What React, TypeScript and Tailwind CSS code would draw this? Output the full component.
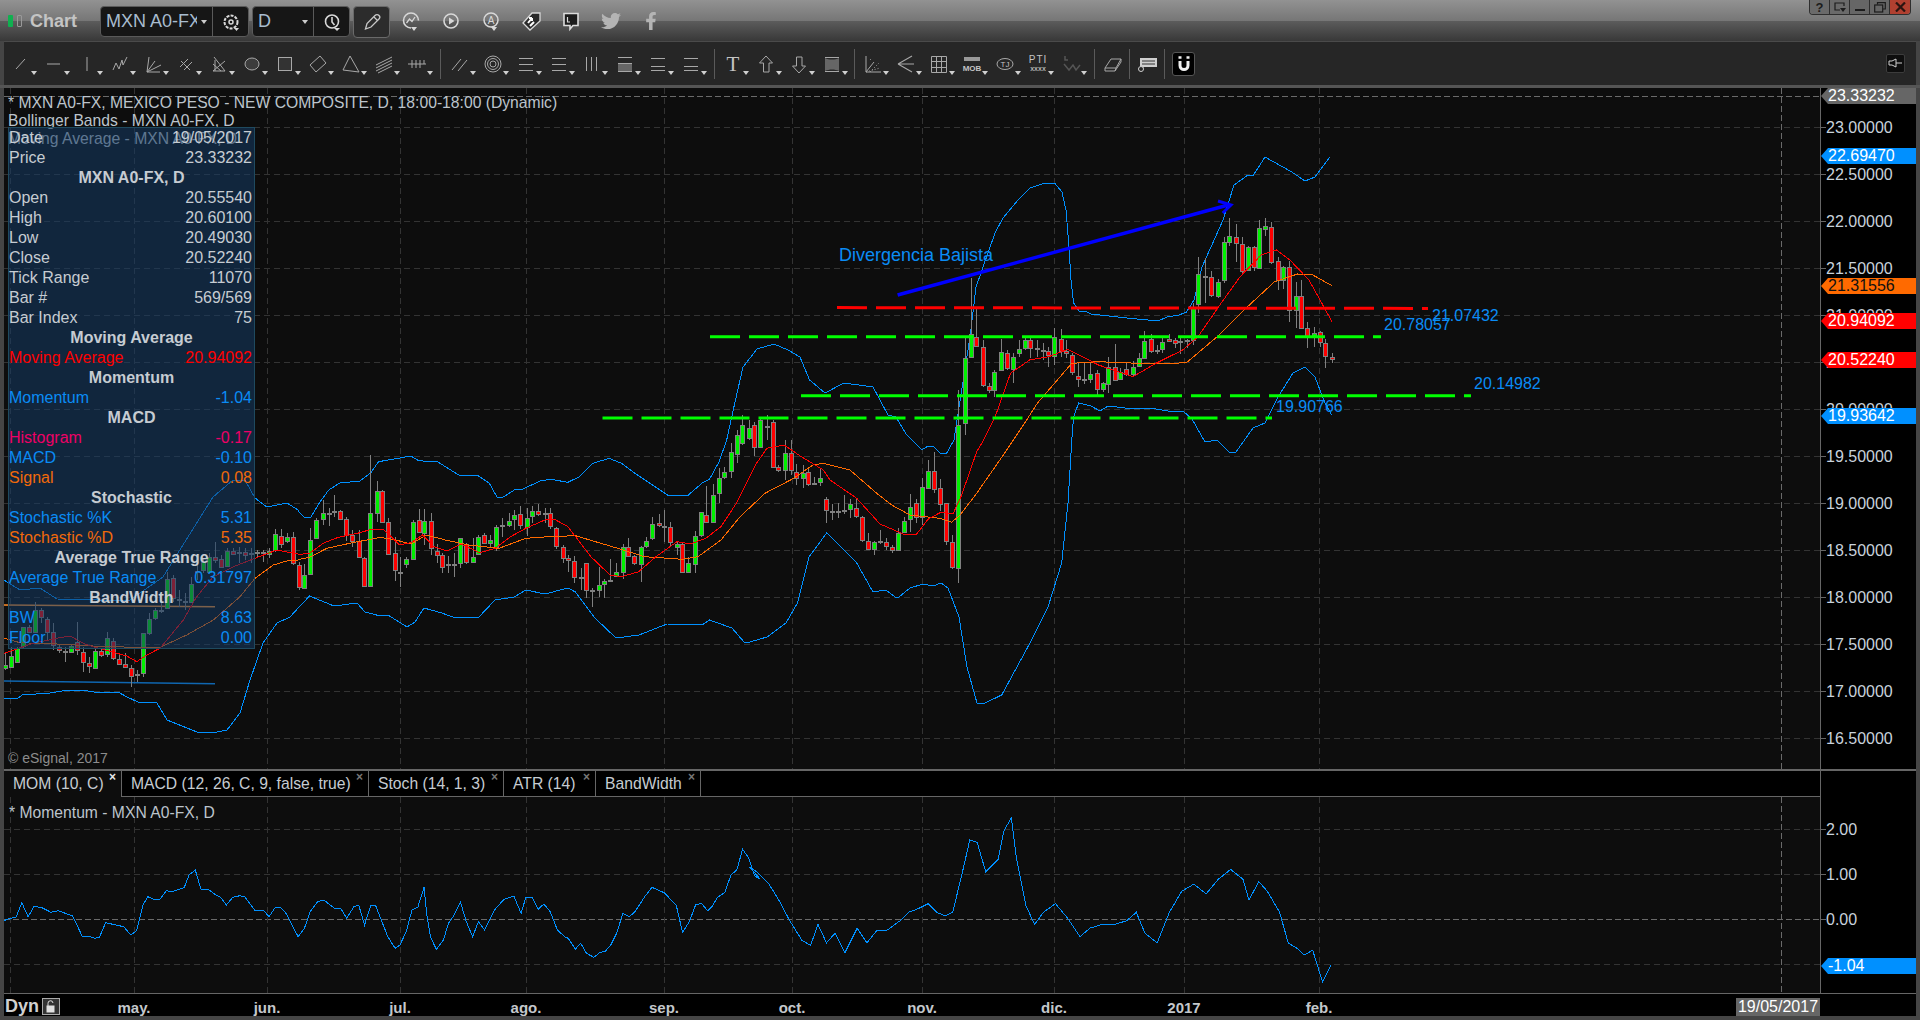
import React from "react";
import { FaTwitter, FaFacebookF } from "react-icons/fa";

type C = [number, number, number, number, number, string];
type XY = (x: number, y: number) => [number, number];

const z5: XY = (x, y) => [x / 3, 390 + y / 3];
const z11: XY = (x, y) => [x / 2.613 + 300, 440 + y / 3];
const z12: XY = (x, y) => [x / 3 + 800, 420 + y / 3];
const z7: XY = (x, y) => [x / 2.613 + 800, 140 + y / 3];
const z6: XY = (x, y) => [x / 2.063, 740 + y / 3];
const disp: XY = (x, y) => [x * 1.2245, y * 1.2245];

const candlesA: C[] = [
  [14, 790, 825, 835, 840, "g"], [32, 770, 797, 830, 835, "g"], [50, 770, 775, 818, 820, "g"], [68, 712, 712, 770, 775, "g"],
  [86, 705, 712, 726, 730, "r"], [104, 635, 660, 725, 727, "g"], [122, 655, 660, 682, 700, "r"], [140, 680, 688, 727, 750, "r"],
  [158, 700, 727, 765, 780, "r"], [176, 765, 770, 780, 790, "r"], [194, 770, 785, 785, 815, "d"], [212, 765, 768, 785, 790, "g"],
  [230, 695, 755, 780, 795, "r"], [248, 770, 785, 815, 845, "r"], [266, 800, 820, 830, 848, "r"], [284, 770, 782, 832, 835, "g"],
  [302, 775, 782, 793, 800, "r"], [320, 725, 745, 793, 800, "g"], [338, 745, 752, 802, 810, "r"], [356, 795, 808, 822, 825, "r"],
  [374, 790, 823, 832, 835, "r"], [392, 825, 835, 858, 890, "r"], [410, 840, 855, 855, 875, "d"], [428, 730, 730, 850, 860, "g"],
  [446, 670, 687, 730, 735, "g"], [464, 655, 660, 685, 690, "g"], [482, 630, 662, 662, 670, "d"], [500, 545, 567, 655, 657, "g"],
  [518, 555, 565, 625, 635, "r"], [536, 600, 630, 630, 650, "d"], [554, 610, 635, 635, 660, "d"], [572, 560, 583, 637, 640, "g"],
  [590, 520, 545, 545, 570, "d"], [608, 505, 515, 540, 550, "g"], [626, 490, 500, 545, 550, "g"], [644, 455, 500, 508, 520, "r"],
  [662, 495, 507, 532, 535, "r"], [680, 475, 482, 527, 530, "g"], [698, 475, 482, 490, 495, "r"], [716, 470, 490, 490, 520, "d"],
  [734, 475, 485, 495, 510, "r"], [752, 475, 492, 492, 520, "d"], [770, 480, 490, 490, 505, "d"], [788, 480, 490, 490, 515, "d"],
  [806, 475, 482, 490, 505, "g"], [824, 418, 433, 480, 485, "g"], [842, 418, 437, 460, 475, "r"], [860, 430, 442, 455, 460, "g"],
  [878, 425, 442, 520, 525, "r"], [896, 515, 525, 590, 600, "r"],
];

const candlesB: C[] = [
  [11, 372, 405, 445, 448, "g"], [27, 265, 300, 403, 405, "g"], [43, 235, 240, 295, 298, "g"], [59, 180, 218, 235, 255, "g"],
  [75, 205, 222, 222, 258, "d"], [90, 165, 215, 215, 230, "d"], [105, 210, 213, 238, 240, "r"], [121, 232, 238, 285, 303, "r"],
  [137, 270, 285, 302, 322, "r"], [153, 270, 302, 350, 352, "r"], [168, 350, 355, 440, 442, "r"], [184, 45, 220, 440, 442, "g"],
  [200, 123, 153, 220, 245, "g"], [215, 150, 153, 245, 250, "r"], [231, 235, 245, 342, 345, "r"], [247, 290, 340, 390, 422, "r"],
  [262, 350, 398, 398, 440, "d"], [278, 350, 358, 372, 385, "g"], [294, 240, 245, 355, 358, "g"], [310, 207, 240, 275, 280, "r"],
  [325, 207, 243, 278, 315, "g"], [341, 218, 243, 325, 345, "r"], [357, 312, 332, 343, 370, "r"], [372, 340, 345, 382, 398, "r"],
  [388, 348, 376, 376, 400, "d"], [403, 340, 374, 374, 412, "d"], [419, 295, 295, 370, 385, "g"], [435, 310, 313, 368, 372, "r"],
  [451, 295, 350, 365, 370, "g"], [466, 285, 290, 340, 345, "g"], [482, 278, 285, 308, 312, "r"], [497, 285, 300, 308, 320, "g"],
  [513, 255, 262, 322, 332, "g"], [529, 235, 258, 258, 290, "d"], [545, 220, 243, 255, 262, "g"], [560, 210, 225, 238, 270, "g"],
  [576, 197, 223, 257, 268, "r"], [592, 205, 235, 262, 288, "g"], [607, 198, 214, 228, 248, "g"], [623, 192, 214, 222, 228, "r"],
  [639, 205, 222, 222, 250, "d"], [654, 205, 220, 260, 268, "r"], [670, 260, 265, 320, 328, "r"], [686, 315, 322, 356, 368, "r"],
  [701, 345, 355, 362, 395, "r"], [717, 348, 362, 410, 428, "r"], [733, 385, 413, 413, 450, "d"], [748, 370, 370, 450, 475, "r"],
  [764, 445, 452, 452, 500, "d"], [780, 382, 436, 450, 470, "g"], [795, 418, 424, 433, 473, "g"], [811, 358, 422, 422, 425, "d"],
  [827, 370, 397, 408, 412, "g"], [843, 312, 320, 395, 417, "g"], [858, 295, 320, 347, 350, "r"], [874, 345, 348, 370, 375, "r"],
  [890, 318, 320, 370, 425, "g"], [905, 290, 302, 318, 325, "g"], [921, 232, 253, 295, 300, "g"], [937, 222, 250, 257, 262, "r"],
  [952, 210, 260, 260, 305, "d"], [968, 245, 260, 305, 320, "r"], [984, 305, 313, 322, 345, "g"], [999, 305, 313, 398, 400, "r"],
  [1015, 350, 370, 398, 400, "g"], [1031, 272, 287, 370, 400, "g"], [1047, 215, 217, 285, 290, "g"], [1062, 137, 225, 245, 250, "r"],
  [1078, 133, 165, 245, 250, "g"], [1094, 85, 115, 160, 190, "g"], [1109, 82, 97, 112, 118, "g"], [1125, 10, 35, 92, 115, "g"],
  [1141, -30, -15, 43, 70, "g"], [1156, -75, -45, 9, 15, "g"], [1172, -60, -36, -6, 0, "g"], [1187, -54, -45, 20, 48, "r"],
  [1203, -66, -60, 20, 25, "g"], [1219, -75, -39, -39, 0, "d"], [1235, -60, -54, 82, 84, "r"], [1250, 75, 82, 92, 96, "r"],
  [1266, 0, 40, 92, 120, "g"], [1282, 0, 40, 90, 105, "r"], [1297, 72, 97, 115, 135, "r"],
];

const candlesC: C[] = [
  [8, 135, 160, 175, 205, "g"], [25, 145, 157, 193, 197, "r"], [43, 170, 191, 191, 195, "d"], [61, 145, 175, 187, 197, "g"],
  [79, 232, 238, 272, 308, "r"], [97, 252, 275, 275, 300, "d"], [115, 250, 275, 275, 295, "d"], [133, 225, 272, 272, 282, "d"],
  [151, 237, 253, 268, 293, "g"], [169, 235, 265, 290, 293, "r"], [187, 288, 292, 360, 365, "r"], [205, 340, 362, 385, 390, "r"],
  [223, 362, 365, 385, 405, "g"], [241, 330, 366, 366, 372, "d"], [259, 355, 365, 376, 390, "r"], [277, 375, 380, 390, 398, "r"],
  [295, 325, 338, 390, 392, "g"], [313, 290, 302, 335, 337, "g"], [331, 222, 262, 298, 335, "g"], [349, 238, 250, 292, 308, "r"],
  [367, 175, 202, 292, 315, "g"], [385, 120, 152, 202, 205, "g"], [403, 97, 152, 205, 218, "r"], [421, 178, 205, 253, 272, "r"],
  [439, 250, 250, 365, 375, "r"], [457, 345, 367, 443, 447, "r"], [475, -90, 14, 443, 488, "g"],
];

const candlesD: C[] = [
  [430, 590, 655, 850, 885, "g"], [446, 415, 582, 652, 655, "g"], [461, 500, 590, 617, 620, "r"], [477, 600, 620, 733, 740, "r"],
  [493, 730, 737, 748, 760, "r"], [508, 690, 695, 748, 770, "g"], [524, 598, 635, 690, 692, "g"], [540, 630, 640, 685, 690, "r"],
  [556, 640, 650, 685, 728, "g"], [571, 600, 628, 640, 650, "g"], [587, 590, 600, 625, 630, "g"], [602, 590, 600, 625, 655, "r"],
  [618, 600, 627, 627, 650, "d"], [634, 610, 632, 632, 660, "d"], [649, 620, 632, 645, 680, "r"], [665, 565, 590, 648, 675, "g"],
  [681, 568, 596, 633, 650, "r"], [696, 600, 634, 640, 655, "r"], [712, 640, 645, 697, 705, "r"], [727, 670, 707, 715, 740, "r"],
  [743, 670, 719, 719, 732, "d"], [759, 670, 703, 718, 730, "g"], [775, 690, 700, 748, 765, "r"], [791, 725, 730, 748, 755, "g"],
  [806, 650, 680, 730, 758, "g"], [822, 612, 680, 718, 722, "r"], [837, 685, 695, 716, 720, "g"], [853, 665, 688, 702, 708, "r"],
  [869, 662, 682, 703, 708, "g"], [885, 640, 653, 678, 682, "g"], [900, 573, 602, 652, 655, "g"], [916, 582, 598, 635, 640, "r"],
  [932, 615, 632, 632, 642, "d"], [947, 595, 605, 627, 640, "g"], [963, 583, 596, 600, 603, "r"], [979, 595, 600, 610, 625, "r"],
  [994, 590, 606, 606, 642, "d"], [1010, 598, 602, 602, 625, "d"], [1026, 490, 502, 600, 615, "g"], [1041, 352, 403, 493, 520, "g"],
  [1057, 355, 410, 410, 490, "d"], [1075, 393, 412, 465, 470, "r"], [1091, 418, 425, 468, 475, "g"], [1107, 290, 307, 422, 428, "g"],
  [1122, 235, 287, 305, 318, "g"], [1138, 252, 290, 307, 365, "r"], [1154, 292, 313, 395, 398, "r"], [1170, 318, 322, 390, 392, "g"],
  [1185, 318, 322, 383, 392, "r"], [1200, 240, 265, 385, 388, "g"], [1216, 235, 258, 268, 288, "g"], [1232, 245, 262, 368, 372, "r"],
  [1248, 352, 362, 418, 450, "r"], [1263, 378, 380, 418, 448, "g"], [1279, 362, 380, 508, 545, "r"], [1295, 425, 468, 510, 565, "g"],
  [1310, 420, 468, 563, 566, "r"], [1326, 545, 565, 590, 625, "r"], [1342, 560, 578, 590, 622, "g"], [1358, 572, 577, 607, 622, "r"],
  [1373, 598, 610, 650, 684, "r"], [1389, 640, 652, 659, 668, "r"],
];

const toReal = (list: C[], f: XY): C[] =>
  list.map(([x, a, b, c, d, t]) => [f(x, 0)[0], f(0, a)[1], f(0, b)[1], f(0, c)[1], f(0, d)[1], t]);

const candles: C[] = [...toReal(candlesA, z5), ...toReal(candlesB, z11), ...toReal(candlesC, z12), ...toReal(candlesD, z7)];

const pts = (f: XY, flat: number[]) => {
  const out: string[] = [];
  for (let i = 0; i < flat.length; i += 2) {
    const [x, y] = f(flat[i], flat[i + 1]);
    out.push(`${x.toFixed(1)},${y.toFixed(1)}`);
  }
  return out.join(" ");
};
const id: XY = (x, y) => [x, y];

const upperBand = [
  pts(id, [4, 580, 20, 590, 40, 588, 57, 599, 100, 600, 130, 600, 163, 577, 213, 497, 233, 480, 245, 480, 255, 498, 267, 507, 287, 503, 298, 510]),
  pts(z11, [0, 220, 12, 232, 28, 232, 50, 190, 75, 150, 105, 128, 155, 124, 185, 98, 205, 65, 250, 56, 290, 48, 310, 62, 360, 66, 415, 105, 465, 107, 495, 130, 515, 172, 530, 172, 560, 150, 580, 148, 630, 122, 655, 118, 700, 127, 730, 110, 765, 70, 808, 55, 840, 70, 875, 100, 960, 165, 1015, 165, 1050, 130, 1070, 118, 1095, 65, 1115, 0]),
  pts(id, [735, 402, 743, 367, 757, 349, 774, 344, 788, 350, 800, 357, 809.6, 380, 825, 393, 844, 383, 873, 387, 888, 415, 896, 417, 906.7, 435, 921.7, 450, 928, 446, 933, 446, 940, 453, 946.7, 453, 954, 440, 957, 420, 970, 337, 976, 287, 982, 270, 995, 233, 1003, 218, 1018, 200, 1030, 188, 1045, 183, 1054.5, 183, 1062, 192, 1066, 210, 1069, 247, 1071, 280, 1073.6, 303, 1079, 311, 1085, 311, 1091, 314, 1117.6, 317, 1137, 319, 1158, 321, 1167, 317, 1179, 315, 1186.5, 312, 1194, 300, 1202, 267, 1215, 238, 1223, 220, 1234, 185, 1248, 175, 1253.5, 175, 1265, 157, 1291.8, 172, 1305, 181, 1315, 177, 1330, 157]),
].join(" ");

const lowerBand = pts(id, [4, 698, 17, 699, 22, 695, 50, 693, 68, 690, 82, 690, 100, 693, 118, 692, 127, 697, 138, 702, 157, 703, 167, 720, 197, 732, 217, 732, 227, 730, 240, 713, 250, 680, 263, 643, 277, 623, 290, 617, 300, 606, 309.6, 596, 334, 606, 357, 603, 365, 612, 376.5, 615, 388, 615, 407, 627, 415, 622, 424, 608, 441.6, 613, 453, 617, 478, 618, 495, 600, 514, 597, 526, 590, 545, 594, 568, 588, 575.5, 592, 595, 618, 616, 638, 639, 635, 667, 624, 702, 625, 709.5, 620, 732, 628, 744, 642, 750, 642, 767, 637, 786, 623, 797.5, 603, 809, 557, 826.7, 533, 856.7, 563, 873, 592, 886, 590, 895, 597, 899, 597, 910, 588, 923, 584, 933, 586, 941, 583, 948, 588, 959, 617, 967, 667, 977, 703, 983, 704, 1001.7, 695, 1030, 643, 1048, 607, 1061.7, 563, 1068, 503, 1072, 437, 1073.6, 417, 1078.6, 403, 1091, 406, 1100, 411, 1108, 406, 1125, 408, 1150, 408, 1168, 411, 1183, 411, 1192, 419, 1205, 442, 1217, 440, 1230, 453, 1236, 452, 1253, 428, 1265, 423, 1278, 397, 1293, 373, 1305, 367, 1315, 377, 1325, 403, 1331.7, 415]);

const redMA = [
  pts(z5, [12, 790, 100, 760, 170, 745, 210, 738, 250, 760, 280, 770, 380, 798, 410, 815, 440, 795, 480, 775, 550, 690, 590, 620, 640, 560, 700, 530, 765, 505, 830, 480, 880, 490]),
  pts(z11, [0, 343, 25, 340, 60, 310, 100, 292, 150, 280, 190, 267, 220, 270, 260, 315, 290, 308, 320, 285, 350, 320, 385, 333, 420, 312, 470, 338, 510, 325, 550, 290, 590, 265, 640, 240, 665, 238, 700, 260, 760, 350, 810, 405, 840, 410, 885, 395, 930, 350, 985, 305, 1020, 312, 1060, 295, 1100, 260, 1140, 190, 1190, 75, 1220, 25, 1265, 15, 1310, 50]),
  pts(z12, [70, 150, 90, 180, 170, 235, 240, 312, 310, 342, 350, 342, 385, 297, 420, 278, 460, 280, 485, 225, 530, 95]),
  pts(z7, [480, 900, 510, 830, 550, 700, 600, 660, 650, 650, 700, 628, 780, 675, 870, 710, 930, 670, 1000, 630, 1040, 590, 1100, 490, 1150, 410, 1205, 345, 1245, 330, 1280, 360, 1330, 420, 1390, 545]),
].join(" ");

const orangeMA = [
  pts(z5, [12, 745, 60, 758, 170, 762, 280, 768, 400, 772, 480, 772, 560, 735, 640, 690, 720, 620, 765, 565, 820, 525, 870, 510, 895, 510]),
  pts(z11, [0, 358, 25, 352, 70, 325, 130, 310, 210, 292, 250, 300, 290, 312, 330, 285, 380, 300, 440, 315, 520, 325, 590, 295, 650, 290, 720, 287, 830, 325, 900, 350, 1000, 358, 1040, 350, 1100, 300, 1150, 230, 1215, 160, 1290, 115, 1340, 75]),
  pts(z12, [70, 130, 150, 150, 230, 220, 275, 255, 330, 285, 420, 295, 455, 307, 480, 285, 530, 220, 610, 105, 680, 0]),
  pts(z7, [620, 790, 710, 670, 780, 665, 930, 672, 1010, 668, 1090, 590, 1160, 510, 1240, 425, 1300, 402, 1340, 405, 1390, 437]),
].join(" ");

const momentum = [
  pts(z6, [8, 542, 20, 535, 33, 532, 45, 488, 58, 530, 70, 500, 85, 502, 105, 517, 120, 512, 150, 528, 170, 590, 185, 590, 195, 595, 205, 592, 218, 548, 255, 560, 270, 585, 282, 572, 295, 495, 305, 470, 318, 478, 330, 478, 343, 452, 355, 455, 380, 443, 390, 405, 403, 390, 415, 450, 430, 448, 445, 465, 455, 472, 467, 495, 480, 472, 495, 467, 505, 470, 525, 510, 543, 510, 555, 530, 568, 502, 578, 502, 590, 520, 615, 590, 628, 565, 640, 515, 655, 485, 668, 480, 690, 505, 703, 505, 715, 535, 730, 500, 740, 495, 752, 555, 765, 497, 775, 497, 800, 590, 815, 625, 825, 615, 838, 575, 850, 510, 862, 502, 875, 442, 880, 520, 888, 590, 900, 628, 915, 600, 925, 550, 935, 530, 950, 487, 962, 545, 975, 590, 987, 545, 1000, 570, 1020, 510, 1040, 478, 1060, 468, 1075, 520, 1085, 472, 1098, 472, 1110, 508, 1122, 492, 1135, 515, 1150, 570, 1165, 590, 1172, 595, 1187, 627, 1198, 610, 1210, 640, 1225, 652, 1238, 637, 1248, 635, 1260, 615, 1272, 580, 1285, 520, 1298, 530, 1310, 515, 1330, 470, 1345, 442, 1370, 458, 1395, 495, 1408, 577, 1422, 545, 1435, 495, 1447, 490, 1460, 512, 1470, 497, 1480, 472, 1495, 458, 1508, 405, 1520, 390, 1532, 328, 1545, 355, 1557, 408, 1568, 417]),
  pts(disp, [612, 708, 618, 712, 628, 722, 636, 735, 645, 752, 655, 768, 662, 772, 668, 755, 675, 770, 682, 762, 690, 778, 700, 758, 708, 770, 716, 760, 724, 760, 735, 752, 742, 745, 750, 742, 758, 738, 765, 745, 772, 748, 778, 745, 786, 712, 792, 686, 798, 688, 805, 712, 815, 702, 820, 678, 826, 668, 830, 700, 838, 740, 845, 755, 852, 745, 862, 738, 872, 750, 882, 765, 890, 758, 900, 755, 910, 755, 920, 752, 928, 745, 935, 762, 945, 770, 955, 745, 965, 728, 975, 722, 985, 730, 995, 718, 1005, 710, 1015, 718, 1020, 735, 1028, 720, 1035, 728, 1045, 745, 1052, 770, 1060, 775, 1065, 780, 1072, 776, 1080, 802, 1087, 788]),
].join(" ");

const vGrid = [10.5, 134.5, 267.5, 400.5, 526.5, 664.5, 792.5, 922.5, 1054.5, 1184.5, 1319.5];
const priceY = [127, 174, 221, 268, 315, 362, 409, 456, 503, 550, 597, 644, 691, 738];
const priceTicks = ["23.00000", "22.50000", "22.00000", "21.50000", "21.00000", "20.50000", "20.00000", "19.50000", "19.00000", "18.50000", "18.00000", "17.50000", "17.00000", "16.50000"];

function Candles() {
  return (
    <g shapeRendering="crispEdges">
      {candles.map(([x, wt, bt, bb, wb, t], i) => {
        const cx = Math.round(x);
        return (
          <g key={i}>
            <line x1={cx + 0.5} x2={cx + 0.5} y1={wt} y2={wb} stroke="#808080" strokeWidth={1} />
            {t === "d" ? (
              <rect x={cx - 2} y={bt - 1} width={5} height={2} fill="#808080" />
            ) : (
              <rect x={cx - 1.5} y={Math.round(bt) + 0.5} width={4} height={Math.max(2, Math.round(bb - bt))} fill={t === "g" ? "#00f000" : "#ff0000"} stroke="#808080" strokeWidth={1} />
            )}
          </g>
        );
      })}
    </g>
  );
}

function PriceChart() {
  return (
    <svg className="absolute inset-0" width={1816} height={681} viewBox="4 88 1816 681">
      {priceY.map((y) => (
        <line key={y} x1={4} x2={1820} y1={y + 0.5} y2={y + 0.5} stroke="#333333" strokeDasharray="6 4" shapeRendering="crispEdges" />
      ))}
      {vGrid.map((x) => (
        <line key={x} x1={x} x2={x} y1={88} y2={769} stroke="#333333" strokeDasharray="6 4" shapeRendering="crispEdges" />
      ))}
      <line x1={4} x2={1820} y1={96.5} y2={96.5} stroke="#6a6a6a" strokeDasharray="6 3" shapeRendering="crispEdges" />
      <line x1={1781.5} x2={1781.5} y1={88} y2={769} stroke="#6a6a6a" strokeDasharray="6 3" shapeRendering="crispEdges" />

      <line x1={4} x2={215} y1={605} y2={606.7} stroke="#ff8f2b" strokeWidth={1.5} />
      <line x1={4} x2={215} y1={681} y2={683.7} stroke="#0f66b0" strokeWidth={1.5} />

      <polyline points={upperBand} fill="none" stroke="#0090ff" strokeWidth={1} shapeRendering="crispEdges" />
      <polyline points={lowerBand} fill="none" stroke="#0090ff" strokeWidth={1} shapeRendering="crispEdges" />
      <Candles />
      <polyline points={orangeMA} fill="none" stroke="#ff6a00" strokeWidth={1} shapeRendering="crispEdges" />
      <polyline points={redMA} fill="none" stroke="#ff0000" strokeWidth={1} shapeRendering="crispEdges" />

      <line x1={710} x2={1381} y1={336.7} y2={336.7} stroke="#00ff00" strokeWidth={3} strokeDasharray="30 9" />
      <line x1={801} x2={1471} y1={395.7} y2={395.7} stroke="#00ff00" strokeWidth={3} strokeDasharray="30 9" />
      <line x1={602.5} x2={1272} y1={418} y2={418} stroke="#00ff00" strokeWidth={3} strokeDasharray="30 9" />
      <line x1={837} x2={1428} y1={307.6} y2={308.4} stroke="#ff0000" strokeWidth={3} strokeDasharray="30 9" />

      <line x1={897.6} x2={1230} y1={295} y2={204.5} stroke="#0000ff" strokeWidth={3.4} />
      <polyline points="1218,201 1231,205 1222.7,213" fill="none" stroke="#0000ff" strokeWidth={3} />
    </svg>
  );
}

function MomentumChart() {
  return (
    <svg className="absolute inset-0" width={1816} height={196} viewBox="4 797 1816 196">
      {[829.5, 874.5, 964.5].map((y) => (
        <line key={y} x1={4} x2={1820} y1={y} y2={y} stroke="#333333" strokeDasharray="6 4" shapeRendering="crispEdges" />
      ))}
      <line x1={4} x2={1820} y1={919.5} y2={919.5} stroke="#6a6a6a" strokeDasharray="6 3" shapeRendering="crispEdges" />
      {vGrid.map((x) => (
        <line key={x} x1={x} x2={x} y1={797} y2={993} stroke="#333333" strokeDasharray="6 4" shapeRendering="crispEdges" />
      ))}
      <line x1={1781.5} x2={1781.5} y1={797} y2={993} stroke="#6a6a6a" strokeDasharray="6 3" shapeRendering="crispEdges" />
      <polyline points={momentum} fill="none" stroke="#0090ff" strokeWidth={1} shapeRendering="crispEdges" />
    </svg>
  );
}

function Ic({ children, stroke = "#a8a8a8" }: { children: React.ReactNode; stroke?: string }) {
  return (
    <svg width={24} height={24} viewBox="0 0 24 24" fill="none" stroke={stroke} strokeWidth={1}>
      {children}
    </svg>
  );
}

function Caret() {
  return (
    <svg width={6} height={4} viewBox="0 0 6 4" className="absolute right-[0px] bottom-[2px]">
      <path d="M0 0H6L3 4Z" fill="#d0d0d0" />
    </svg>
  );
}

function Tool({ children }: { children: React.ReactNode }) {
  return (
    <div className="relative flex h-[26px] w-[33px] items-center justify-center">
      {children}
      <Caret />
    </div>
  );
}

function Sep({ className }: { className: string }) {
  return <div className={`h-[30px] w-px bg-[#5a5a5a] ${className}`} />;
}

const drawTools: React.ReactNode[] = [
  <path d="M7 17L16 7" />,
  <path d="M5 12H18" />,
  <path d="M12 5V19" />,
  <path d="M5 18L8 11L11 17L14 8L15 13L19 5" />,
  <path d="M6 20L8 5M6 20L14 9M6 20L20 13M6 20H19" />,
  <path d="M6 15L14 7M10 18L18 10M7 9L16 18" />,
  <path d="M7 5L18 19M6 19L18 9M6 19H18M6 12L14 19M8 8V19" />,
  <ellipse cx={12} cy={12} rx={7} ry={6} fill="#3c3c3c" />,
  <rect x={5.5} y={5.5} width={13} height={13} fill="#333333" />,
  <path d="M14 4L20 11L10 20L4 13Z" />,
  <path d="M11 4L20 20L4 18Z" />,
  <path d="M4 13L20 5M4 16L20 8M4 19L20 11M6 21L20 14" />,
  <path d="M3 12H21M7 8V16M11 8V16M15 8V16M19 8V12" />,
];

const shapeTools: React.ReactNode[] = [
  <path d="M4 18L13 7M10 19L19 8" />,
  <>
    <circle cx={12} cy={12} r={8} />
    <circle cx={12} cy={12} r={5.5} />
    <circle cx={12} cy={12} r={3} />
  </>,
  <path d="M5 6.5H19M5 12.5H19M5 18.5H19" />,
  <path d="M5 6.5H19M5 12.5H19M5 18.5H19" />,
  <path d="M6.5 5V19M11.5 5V19M16.5 5V19" />,
  <>
    <rect x={5} y={12} width={14} height={7} fill="#666666" stroke="none" />
    <path d="M5 5.5H19M5 11.5H19M5 19.5H19" />
  </>,
  <path d="M5 6.5H19M5 14.5H19M5 18.5H19" strokeWidth={1.2} />,
  <path d="M5 6.5H19M5 14.5H19M5 18.5H19" strokeWidth={1.2} />,
];

const markTools: React.ReactNode[] = [
  <text x={12} y={19} textAnchor="middle" fontFamily="'Liberation Serif', serif" fontSize={21} fill="#c4c4c4" stroke="none">T</text>,
  <path d="M12 4L18.5 11H15V20H9.5V11H5.5Z" />,
  <path d="M12 21L18.5 14H15V5H9.5V14H5.5Z" />,
  <>
    <path d="M5 6C9 8 15 8 19 6V19C15 17 9 17 5 19Z" fill="#666666" stroke="none" />
    <path d="M5 5.5H19M5 19.5H19" />
  </>,
];

const studyTools: React.ReactNode[] = [
  <>
    <path d="M5 4V20H20M5 20L13 10" />
    <path d="M9 20L18 11M5 20L19 16M9 8L11 6" strokeDasharray="1 2" />
  </>,
  <path d="M4 12L18 4M4 12H20M4 12L18 20" strokeWidth={1.1} />,
  <path d="M4.5 4.5H19.5V20.5H4.5ZM4.5 9.5H19.5M4.5 15.5H19.5M9.5 4.5V20.5M14.5 4.5V20.5" />,
  <>
    <rect x={4} y={5} width={16} height={4} fill="#999999" stroke="none" />
    <text x={12} y={19} textAnchor="middle" fontFamily="'Liberation Sans', sans-serif" fontWeight={700} fontSize={8} fill="#c4c4c4" stroke="none">MOB</text>
  </>,
  <>
    <ellipse cx={12} cy={12} rx={8} ry={5.5} />
    <text x={12} y={15} textAnchor="middle" fontFamily="'Liberation Sans', sans-serif" fontSize={8} fill="#c4c4c4" stroke="none">TJ</text>
  </>,
  <>
    <text x={12} y={11} textAnchor="middle" fontFamily="'Liberation Sans', sans-serif" fontSize={10} letterSpacing={1} fill="#c4c4c4" stroke="none">PTI</text>
    <text x={12} y={19} textAnchor="middle" fontFamily="'Liberation Sans', sans-serif" fontWeight={700} fontSize={7} fill="#b0b0b0" stroke="none">xxxx</text>
  </>,
  <path d="M6 4V8H9M5 12L10 18L14 13L17 18L21 13" stroke="#555555" strokeWidth={1.5} />,
];

function TitleIcon({ children }: { children: React.ReactNode }) {
  return <div className="relative flex h-[30px] w-[40px] items-center justify-center">{children}</div>;
}

function TitleBar() {
  return (
    <div className="flex h-[41px] items-start bg-[linear-gradient(#929292_0,#767676_21px,#5c5c5c_21px,#383838_41px)]">
      <div className="mt-[15px] ml-[8px] h-[12px] w-[5px] rounded-[1px] bg-[#10b050]" />
      <div className="mt-[15px] ml-[4px] h-[12px] w-[5px] rounded-[1px] border border-[#999999]" />
      <div className="mt-[10px] ml-[8px] text-[18px] leading-[22px] font-bold text-[#c4c4c4]">Chart</div>

      <div className="mt-[6px] ml-[23px] flex h-[31px] w-[149px] rounded-[4px] border border-[#5a5a5a] bg-[#161616]">
        <div className="relative flex w-[112px] items-center overflow-hidden border-r border-[#5a5a5a] pl-[5px] text-[18px] text-[#a8bccf]">
          <span className="w-[91px] overflow-hidden whitespace-nowrap">MXN A0-FX</span>
          <svg width={6} height={4} viewBox="0 0 6 4" className="absolute right-[5px] top-[13px]"><path d="M0 0H6L3 4Z" fill="#cccccc" /></svg>
        </div>
        <div className="relative flex flex-1 items-center justify-center">
          <svg width={20} height={20} viewBox="0 0 20 20" fill="none" stroke="#d8d8d8">
            <circle cx={10} cy={10} r={6.5} strokeWidth={2} strokeDasharray="3 1.2" />
            <circle cx={10} cy={10} r={2} strokeWidth={1.5} />
            <path d="M13 16H18L15.5 19Z" fill="#d8d8d8" stroke="none" />
          </svg>
        </div>
      </div>

      <div className="mt-[6px] ml-[3px] flex h-[31px] w-[98px] rounded-[4px] border border-[#5a5a5a] bg-[#161616]">
        <div className="relative flex w-[61px] items-center border-r border-[#5a5a5a] pl-[5px] text-[18px] text-[#a8bccf]">
          D
          <svg width={6} height={4} viewBox="0 0 6 4" className="absolute right-[5px] top-[13px]"><path d="M0 0H6L3 4Z" fill="#cccccc" /></svg>
        </div>
        <div className="flex flex-1 items-center justify-center">
          <svg width={20} height={20} viewBox="0 0 20 20" fill="none" stroke="#d8d8d8" strokeWidth={1.6}>
            <circle cx={10} cy={9.5} r={6.5} />
            <path d="M10 5V10L12.5 13" />
            <path d="M12 16H18L15 19Z" fill="#d8d8d8" stroke="none" />
          </svg>
        </div>
      </div>

      <div className="mt-[6px] ml-[3px] flex h-[32px] w-[37px] items-center justify-center rounded-[4px] border border-[#6a6a6a] bg-[#2c2c2c]">
        <svg width={20} height={20} viewBox="0 0 20 20" fill="none" stroke="#c8c8c8" strokeWidth={1.3}>
          <path d="M3.5 17L5 11.5L13 3.5C14 2.5 16 2.5 17 3.5C18 4.5 18 6 17 7L9 15Z" />
          <path d="M12 5L15.5 8.5" />
        </svg>
      </div>

      <div className="mt-[6px] ml-[1px] flex">
        <TitleIcon>
          <svg width={22} height={22} viewBox="0 0 22 22" fill="none" stroke="#d8d8d8" strokeWidth={1.6}>
            <path d="M11 18A7.5 7.5 0 1 1 18.5 10.5" />
            <path d="M6.5 13L9.5 9L12 11.5L15 7" strokeWidth={1.3} />
            <path d="M11 17H17L14 21Z" fill="#d8d8d8" stroke="none" />
          </svg>
        </TitleIcon>
        <TitleIcon>
          <svg width={20} height={20} viewBox="0 0 20 20" fill="none" stroke="#d8d8d8" strokeWidth={1.6}>
            <circle cx={10} cy={10} r={7} />
            <path d="M8 6.5L13.5 10L8 13.5Z" fill="#d8d8d8" stroke="none" />
          </svg>
        </TitleIcon>
        <TitleIcon>
          <svg width={22} height={22} viewBox="0 0 22 22" fill="none" stroke="#d8d8d8" strokeWidth={1.5}>
            <circle cx={11} cy={10} r={7} />
            <text x={11} y={14} textAnchor="middle" fontFamily="'Liberation Sans', sans-serif" fontSize={10} fill="#d8d8d8" stroke="none">A</text>
            <path d="M11 17H17L14 21Z" fill="#d8d8d8" stroke="none" />
          </svg>
        </TitleIcon>
        <TitleIcon>
          <svg width={22} height={22} viewBox="0 0 22 22" fill="none">
            <path d="M3 13L12 3H20V11L10 20Z" fill="#2a2a2a" stroke="#d8d8d8" strokeWidth={1.3} />
            <path d="M8 13L12 8M12 8V11M12 8H9M14 12L10 16" stroke="#ffffff" strokeWidth={2} />
          </svg>
        </TitleIcon>
        <TitleIcon>
          <svg width={22} height={22} viewBox="0 0 22 22" fill="none" stroke="#dcdcdc" strokeWidth={1.6}>
            <path d="M4 3.5H18V15.5H13L10 19V15.5H4Z" fill="#1c1c1c" />
            <path d="M7.5 7V12H10" strokeWidth={1.2} />
          </svg>
        </TitleIcon>
        <TitleIcon><FaTwitter size={20} color="#b4b4b4" /></TitleIcon>
        <TitleIcon><FaFacebookF size={18} color="#b4b4b4" /></TitleIcon>
      </div>

      <div className="mr-[9px] ml-auto flex h-[15px] overflow-hidden rounded-b-[4px] border border-t-0 border-[#2e2e2e] text-[#1c1c1c]">
        <div className="flex w-[20px] items-center justify-center border-r border-[#2e2e2e] bg-[#6a6a6a] text-[13px] leading-none font-bold">?</div>
        <div className="flex w-[20px] items-center justify-center border-r border-[#2e2e2e] bg-[#6a6a6a]">
          <svg width={12} height={11} viewBox="0 0 12 11" fill="none" stroke="#1c1c1c" strokeWidth={1.2}>
            <path d="M6 8H1V1H10V4" />
            <path d="M6 6H12L9 10Z" fill="#1c1c1c" stroke="none" />
          </svg>
        </div>
        <div className="flex w-[20px] items-end justify-center border-r border-[#2e2e2e] bg-[#666666] pb-[3px]">
          <div className="h-[2px] w-[10px] bg-[#1c1c1c]" />
        </div>
        <div className="flex w-[20px] items-center justify-center border-r border-[#2e2e2e] bg-[#666666]">
          <svg width={12} height={11} viewBox="0 0 12 11" fill="none" stroke="#1c1c1c" strokeWidth={1.2}>
            <path d="M3.5 2.5V0.7H11.3V7H9" />
            <rect x={0.7} y={3} width={8} height={7} />
          </svg>
        </div>
        <div className="flex w-[20px] items-center justify-center bg-[#b04030] text-[14px] leading-none font-bold text-[#2a1410]">
          <svg width={11} height={10} viewBox="0 0 11 10" fill="none" stroke="#2a1410" strokeWidth={2.2}>
            <path d="M1 0.5L10 9.5M10 0.5L1 9.5" />
          </svg>
        </div>
      </div>
    </div>
  );
}

function ToolBar() {
  return (
    <div className="mx-[4px] flex h-[44px] items-center border-t border-[#4a4a4a] bg-[#262626]">
      {drawTools.map((c, i) => <Tool key={i}><Ic>{c}</Ic></Tool>)}
      <Sep className="mr-[2px] ml-[7px]" />
      {shapeTools.map((c, i) => <Tool key={i}><Ic>{c}</Ic></Tool>)}
      <Sep className="mr-[1px] ml-[7px]" />
      {markTools.map((c, i) => <Tool key={i}><Ic>{c}</Ic></Tool>)}
      <Sep className="mr-[1px] ml-[6px]" />
      {studyTools.map((c, i) => <Tool key={i}><Ic stroke={i === 6 ? "#555555" : "#a8a8a8"}>{c}</Ic></Tool>)}
      <Sep className="mr-[2px] ml-[7px]" />
      <div className="flex h-[26px] w-[32px] items-center justify-center">
        <Ic><path d="M4 16L10 7H20L15 16ZM4 16V19H14L15 16M14 19L20 10V7" /></Ic>
      </div>
      <Sep className="" />
      <div className="flex h-[26px] w-[34px] items-center justify-center">
        <svg width={24} height={24} viewBox="0 0 24 24">
          <path d="M5 6H22V15H9L5 18Z" fill="#cfcfcf" />
          <path d="M7 9H20M7 12H20" stroke="#333333" />
          <circle cx={6} cy={17} r={2.5} fill="#262626" stroke="#cfcfcf" />
        </svg>
      </div>
      <Sep className="" />
      <div className="ml-[7px] flex h-[24px] w-[23px] items-center justify-center rounded-[3px] border border-[#555555] bg-black">
        <svg width={18} height={18} viewBox="0 0 18 18" fill="none" stroke="#f0f0f0">
          <path d="M5 6V10.5A4 4 0 0 0 13 10.5V6" strokeWidth={3} />
          <path d="M3.5 2.5H6.5M11.5 2.5H14.5" strokeWidth={2.5} />
        </svg>
      </div>
      <div className="mr-[11px] ml-auto flex h-[19px] w-[19px] items-center justify-center rounded-[2px] border border-[#3c3c3c] bg-[#0e0e0e]">
        <svg width={15} height={11} viewBox="0 0 15 11" fill="none" stroke="#d0d0d0">
          <path d="M1 3H4L8 1V9L4 7H1ZM8 5H14" />
        </svg>
      </div>
    </div>
  );
}

type Row = { h?: string; l?: string; v?: string; c?: string };
const rows: Row[] = [
  { l: "Date", v: "19/05/2017" },
  { l: "Price", v: "23.33232" },
  { h: "MXN A0-FX, D" },
  { l: "Open", v: "20.55540" },
  { l: "High", v: "20.60100" },
  { l: "Low", v: "20.49030" },
  { l: "Close", v: "20.52240" },
  { l: "Tick Range", v: "11070" },
  { l: "Bar #", v: "569/569" },
  { l: "Bar Index", v: "75" },
  { h: "Moving Average" },
  { l: "Moving Average", v: "20.94092", c: "text-[#ff0000]" },
  { h: "Momentum" },
  { l: "Momentum", v: "-1.04", c: "text-[#0a8cf5]" },
  { h: "MACD" },
  { l: "Histogram", v: "-0.17", c: "text-[#ee0066]" },
  { l: "MACD", v: "-0.10", c: "text-[#0a8cf5]" },
  { l: "Signal", v: "0.08", c: "text-[#f26a0a]" },
  { h: "Stochastic" },
  { l: "Stochastic %K", v: "5.31", c: "text-[#0a8cf5]" },
  { l: "Stochastic %D", v: "5.35", c: "text-[#f26a0a]" },
  { h: "Average True Range" },
  { l: "Average True Range", v: "0.31797", c: "text-[#0a8cf5]" },
  { h: "BandWidth" },
  { l: "BW", v: "8.63", c: "text-[#0a8cf5]" },
  { l: "Floor", v: "0.00", c: "text-[#0a8cf5]" },
];

function InfoPanel() {
  return (
    <div className="absolute top-[39px] left-[4px] w-[247px] border border-[#1f4a5f] bg-[#163a64]/56 text-[16px] leading-[20px] text-[#c6ccd2]">
      {rows.map((r, i) =>
        r.h ? (
          <div key={i} className="h-[20px] text-center font-bold">{r.h}</div>
        ) : (
          <div key={i} className={`flex h-[20px] justify-between pr-[2px] pl-[0px] ${r.c ?? ""}`}>
            <span>{r.l}</span>
            <span>{r.v}</span>
          </div>
        ),
      )}
    </div>
  );
}

const flagsTop = [
  { v: "23.33232", c: "top-[0px] bg-[#666666] text-white" },
  { v: "22.69470", c: "top-[60px] bg-[#0090ff] text-white" },
  { v: "21.31556", c: "top-[190px] bg-[#ff6a00] text-[#111111]" },
  { v: "20.94092", c: "top-[225px] bg-[#ff0000] text-white" },
  { v: "20.52240", c: "top-[264px] bg-[#ff0000] text-white" },
  { v: "19.93642", c: "top-[320px] bg-[#0090ff] text-white" },
];

function Flag({ v, c }: { v: string; c: string }) {
  return (
    <div className={`absolute left-0 h-[16px] w-[95px] pl-[7px] text-[16px] leading-[16px] [clip-path:polygon(0_50%,7px_0,100%_0,100%_100%,7px_100%)] ${c}`}>
      {v}
    </div>
  );
}

function PriceAxis() {
  return (
    <div className="relative w-[96px] border-l border-[#666666] bg-black text-[16px] leading-[16px] text-[#c8d2dc]">
      {priceY.map((y, i) => (
        <React.Fragment key={y}>
          <div className="absolute left-0 h-px w-[5px] bg-[#666666]" style={{ top: y - 88 }} />
          <div className="absolute left-[5px]" style={{ top: y - 88 - 7 }}>{priceTicks[i]}</div>
        </React.Fragment>
      ))}
      {flagsTop.map((f) => <Flag key={f.v} v={f.v} c={f.c} />)}
    </div>
  );
}

const notes = [
  { t: "Divergencia Bajista", c: "left-[835px] top-[158px] text-[18px]" },
  { t: "21.07432", c: "left-[1428px] top-[219px] text-[16px]" },
  { t: "20.78057", c: "left-[1380px] top-[228px] text-[16px]" },
  { t: "20.14982", c: "left-[1470px] top-[287px] text-[16px]" },
  { t: "19.90766", c: "left-[1272px] top-[310px] text-[16px]" },
];

const tabs = [
  { t: "MOM (10, C)", c: "w-[118px] bg-[#0d0d0d]", x: "text-[#e8e8e8]" },
  { t: "MACD (12, 26, C, 9, false, true)", c: "w-[247px] border-b border-[#666666] bg-black", x: "text-[#777777]" },
  { t: "Stoch (14, 1, 3)", c: "w-[135px] border-b border-[#666666] bg-black", x: "text-[#777777]" },
  { t: "ATR (14)", c: "w-[92px] border-b border-[#666666] bg-black", x: "text-[#777777]" },
  { t: "BandWidth", c: "w-[105px] border-b border-[#666666] bg-black", x: "text-[#777777]" },
];

const months = [
  { t: "may.", c: "left-[130px]" },
  { t: "jun.", c: "left-[263px]" },
  { t: "jul.", c: "left-[396px]" },
  { t: "ago.", c: "left-[522px]" },
  { t: "sep.", c: "left-[660px]" },
  { t: "oct.", c: "left-[788px]" },
  { t: "nov.", c: "left-[918px]" },
  { t: "dic.", c: "left-[1050px]" },
  { t: "2017", c: "left-[1180px]" },
  { t: "feb.", c: "left-[1315px]" },
];

export default function App() {
  return (
    <div className="flex h-[1020px] w-[1920px] flex-col overflow-hidden bg-[#454545] font-['Liberation_Sans',Arial,sans-serif]">
      <TitleBar />
      <ToolBar />
      <div className="h-[3px] bg-[#555555]" />
      <div className="mx-[4px] flex h-[681px]">
        <div className="relative w-[1816px] overflow-hidden bg-[#0d0d0d]">
          <PriceChart />
          <div className="absolute top-[6px] left-[4px] text-[15.7px] leading-[18px] whitespace-nowrap text-[#bcc4cc]">
            <div>* MXN A0-FX, MEXICO PESO - NEW COMPOSITE, D, 18:00-18:00 (Dynamic)</div>
            <div>Bollinger Bands - MXN A0-FX, D</div>
            <div>Moving Average - MXN A0-FX, D</div>
          </div>
          {notes.map((n) => (
            <div key={n.t} className={`absolute leading-[18px] text-[#0a8cf5] ${n.c}`}>{n.t}</div>
          ))}
          <InfoPanel />
          <div className="absolute top-[661px] left-[4px] text-[14px] leading-[18px] text-[#8c8c8c]">© eSignal, 2017</div>
        </div>
        <PriceAxis />
      </div>
      <div className="mx-[4px] h-[2px] bg-[#666666]" />
      <div className="mx-[4px] flex h-[222px]">
        <div className="flex w-[1816px] flex-col">
          <div className="flex h-[26px] bg-black text-[15.7px] leading-[26px] text-[#c6ccd2]">
            {tabs.map((t) => (
              <div key={t.t} className={`relative border-r border-[#666666] pl-[9px] whitespace-nowrap ${t.c}`}>
                {t.t}
                <span className={`absolute top-[-1px] right-[5px] text-[12px] leading-[14px] font-bold ${t.x}`}>×</span>
              </div>
            ))}
            <div className="flex-1 border-b border-[#666666]" />
          </div>
          <div className="relative h-[196px] overflow-hidden bg-[#0d0d0d]">
            <MomentumChart />
            <div className="absolute top-[7px] left-[5px] text-[15.7px] leading-[18px] text-[#bcc4cc]">* Momentum - MXN A0-FX, D</div>
          </div>
        </div>
        <div className="relative w-[96px] border-l border-[#666666] bg-black text-[16px] leading-[16px] text-[#c8d2dc]">
          {[
            { v: "2.00", y: 58 },
            { v: "1.00", y: 103 },
            { v: "0.00", y: 148 },
          ].map((t) => (
            <React.Fragment key={t.v}>
              <div className="absolute left-0 h-px w-[5px] bg-[#666666]" style={{ top: t.y }} />
              <div className="absolute left-[5px]" style={{ top: t.y - 7 }}>{t.v}</div>
            </React.Fragment>
          ))}
          <Flag v="-1.04" c="top-[187px] bg-[#0090ff] text-white" />
        </div>
      </div>
      <div className="relative mx-[4px] h-[23px] border-t border-[#666666] bg-black">
        <div className="absolute top-[1px] left-[1px] flex items-center gap-[3px]">
          <span className="text-[18px] leading-[22px] font-bold text-[#d0d0d0]">Dyn</span>
          <div className="flex h-[17px] w-[18px] items-center justify-center border border-[#aaaaaa] bg-[#333333]">
            <svg width={12} height={13} viewBox="0 0 12 13" fill="none" stroke="#e0e0e0">
              <path d="M3 6V3.5A2.5 2.5 0 0 1 8 3" />
              <rect x={2} y={6} width={7} height={6} fill="#e0e0e0" />
            </svg>
          </div>
        </div>
        {months.map((m) => (
          <div key={m.t} className={`absolute top-[2px] w-0 whitespace-nowrap ${m.c}`}>
            <span className="inline-block -translate-x-1/2 text-[15px] leading-[18px] font-bold text-[#c4c8cc]">{m.t}</span>
          </div>
        ))}
        <div className="absolute top-[4px] left-[1732px] h-[18px] w-[84px] bg-[#666666] text-center text-[16px] leading-[18px] text-white">19/05/2017</div>
      </div>
    </div>
  );
}
